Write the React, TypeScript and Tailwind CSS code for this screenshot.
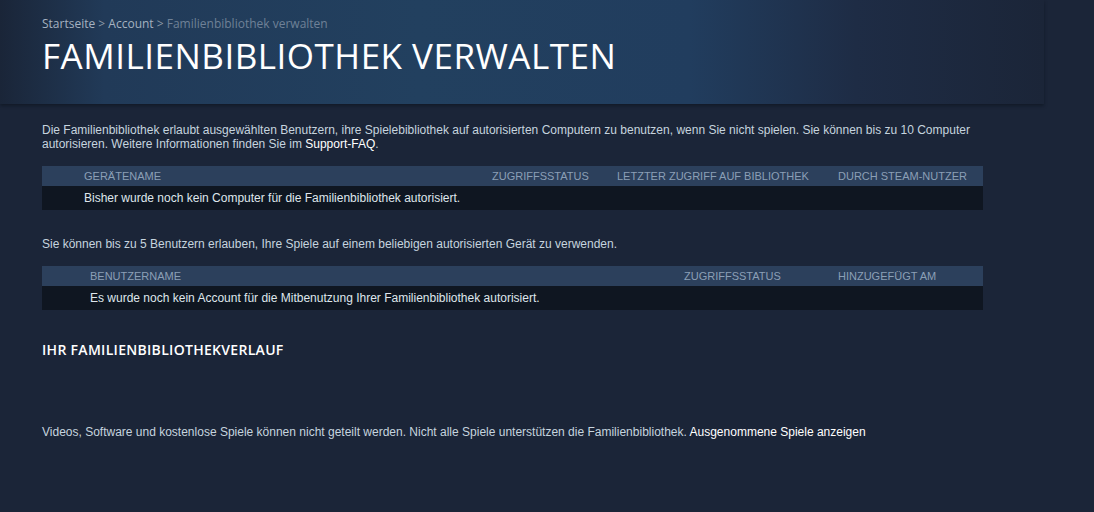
import React from 'react';

const arial = { fontFamily: '"Liberation Sans", Arial, sans-serif' };
const motiva = { fontFamily: '"Open Sans", sans-serif' };

type Col = { label: string; w: string };

function InfoTable({ cols, empty, pad }: { cols: Col[]; empty: string; pad: string }) {
  return (
    <div className="w-[941px]">
      <div className={`flex h-[20px] items-center bg-[#2c405c] text-[11px] uppercase text-[#8b9fb6] ${pad}`}>
        {cols.map((c) => (
          <div key={c.label} className={`${c.w} shrink-0 whitespace-nowrap`}>
            {c.label}
          </div>
        ))}
      </div>
      <div className={`flex h-[24px] items-center bg-[#0f1621] text-[12px] text-[#dfe6ec] ${pad}`}>
        {empty}
      </div>
    </div>
  );
}

export default function App() {
  return (
    <div className="min-h-[512px] w-[1094px] bg-[#1b2538] text-[#c6d4df]" style={arial}>
      {/* Header banner */}
      <div className="h-[104px] w-[1044px] bg-[linear-gradient(90deg,#1a2538_0%,#213a58_10%,#22405f_40%,#213d5e_66%,#1e2c45_82%,#1b2538_100%)] pl-[42px] pt-[17px] shadow-[0_2px_3px_rgba(10,16,26,0.5)]">
        <div className="text-[12px] leading-[14px] text-[#8d99a6]" style={motiva}>
          <span className="text-[#a5b2c0]">Startseite</span>
          <span> &gt; </span>
          <span className="text-[#a5b2c0]">Account</span>
          <span> &gt; </span>
          <span className="text-[#6f8197]">Familienbibliothek verwalten</span>
        </div>
        <h1 className="mt-[3px] text-[35px] leading-[44px] tracking-[0.5px] text-white" style={motiva}>
          FAMILIENBIBLIOTHEK VERWALTEN
        </h1>
      </div>

      <div className="w-[983px] pl-[42px] text-[12px] leading-[14px]">
        <p className="mt-[19px]">
          Die Familienbibliothek erlaubt ausgewählten Benutzern, ihre Spielebibliothek auf autorisierten Computern zu benutzen, wenn Sie nicht spielen. Sie können bis zu 10 Computer autorisieren. Weitere Informationen finden Sie im{' '}
          <span className="text-white">Support-FAQ</span>.
        </p>

        <div className="mt-[15px]">
          <InfoTable
            pad="pl-[42px]"
            cols={[
              { label: 'Gerätename', w: 'w-[408px]' },
              { label: 'Zugriffsstatus', w: 'w-[125px]' },
              { label: 'Letzter Zugriff auf Bibliothek', w: 'w-[221px]' },
              { label: 'Durch Steam-Nutzer', w: 'w-[120px]' },
            ]}
            empty="Bisher wurde noch kein Computer für die Familienbibliothek autorisiert."
          />
        </div>

        <p className="mt-[27px]">
          Sie können bis zu 5 Benutzern erlauben, Ihre Spiele auf einem beliebigen autorisierten Gerät zu verwenden.
        </p>

        <div className="mt-[15px]">
          <InfoTable
            pad="pl-[48px]"
            cols={[
              { label: 'Benutzername', w: 'w-[594px]' },
              { label: 'Zugriffsstatus', w: 'w-[154px]' },
              { label: 'Hinzugefügt am', w: 'w-[120px]' },
            ]}
            empty="Es wurde noch kein Account für die Mitbenutzung Ihrer Familienbibliothek autorisiert."
          />
        </div>

        <h2 className="mt-[32px] text-[14px] font-semibold uppercase leading-[16px] tracking-[0.3px] text-white" style={motiva}>
          Ihr Familienbibliothekverlauf
        </h2>

        <p className="mt-[67px]">
          Videos, Software und kostenlose Spiele können nicht geteilt werden. Nicht alle Spiele unterstützen die Familienbibliothek.{' '}
          <span className="text-white">Ausgenommene Spiele anzeigen</span>
        </p>
      </div>
    </div>
  );
}
